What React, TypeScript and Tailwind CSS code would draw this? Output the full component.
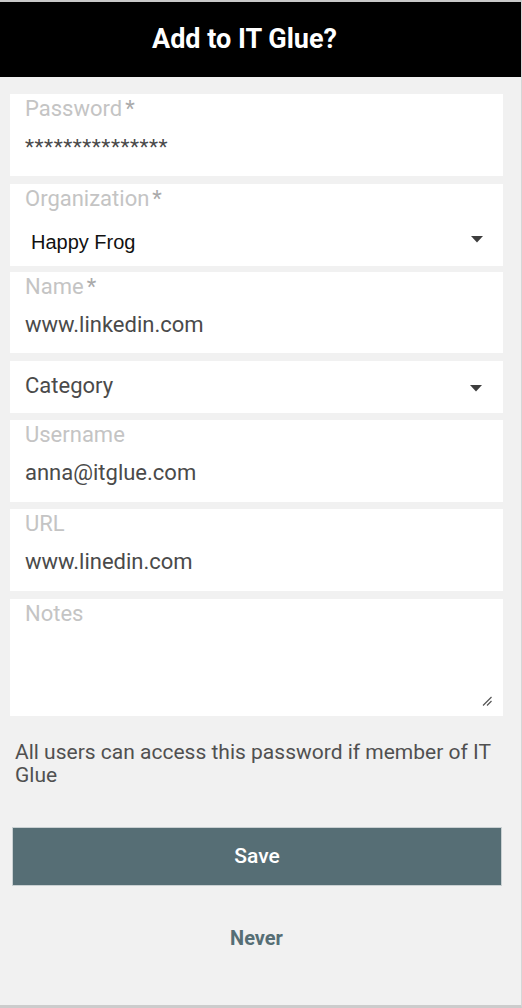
import React from "react";

const font = { fontFamily: "Roboto, 'Noto Sans', sans-serif" };

function Caret() {
  return (
    <svg width="12" height="7" viewBox="0 0 12 7" className="shrink-0">
      <path d="M0 0 H12 L6 6.5 Z" fill="#3d3d3d" />
    </svg>
  );
}

function Field({
  label,
  required,
  value,
  mt,
}: {
  label: string;
  required?: boolean;
  value: string;
  mt: string;
}) {
  return (
    <div className={`bg-white h-[82px] px-[15px] pt-[4px] ${mt}`}>
      <div className="h-[22px] leading-[22px] text-[22px] text-[#c4c4c4]">
        {label}
        {required && <span className="ml-[3px] text-[#aaaaaa]">*</span>}
      </div>
      <div className="mt-[16px] h-[22px] leading-[22px] text-[22px] text-[#4a4a4a]">{value}</div>
    </div>
  );
}

export default function App() {
  return (
    <div
      className="w-[522px] h-[1008px] bg-[#f1f1f1] border-t-2 border-t-[#c9c9c9] border-r border-r-[#d6d6d6] border-b-[3px] border-b-[#cccccc] flex flex-col overflow-hidden"
      style={font}
    >
      <div className="h-[75px] bg-black flex items-center justify-center shrink-0 pr-[32px]">
        <h1 className="text-white text-[27px] font-bold leading-none mb-[1px]">Add to IT Glue?</h1>
      </div>

      <div className="pl-[10px] pr-[18px] pt-[17px] flex flex-col">
        <div className="bg-white h-[82px] px-[15px] pt-[4px]">
          <div className="h-[22px] leading-[22px] text-[22px] text-[#c4c4c4]">
            Password<span className="ml-[3px] text-[#aaaaaa]">*</span>
          </div>
          <div className="mt-[16px] h-[22px] leading-[22px] text-[21px] text-[#4a4a4a] tracking-[0.5px]">
            ***************
          </div>
        </div>

        <div className="bg-white h-[82px] mt-[8px] pl-[15px] pr-[20px] pt-[4px]">
          <div className="h-[22px] leading-[22px] text-[22px] text-[#c4c4c4]">
            Organization<span className="ml-[3px] text-[#aaaaaa]">*</span>
          </div>
          <div className="mt-[21px] h-[22px] flex items-center justify-between">
            <span
              className="pl-[6px] text-[20px] leading-[22px] text-[#111111]"
              style={{ fontFamily: "'Liberation Sans', Arial, sans-serif" }}
            >
              Happy Frog
            </span>
            <span className="-mt-[6px]">
              <Caret />
            </span>
          </div>
        </div>

        <div className="bg-white h-[81px] mt-[6px] px-[15px] pt-[4px]">
          <div className="h-[22px] leading-[22px] text-[22px] text-[#c4c4c4]">
            Name<span className="ml-[3px] text-[#aaaaaa]">*</span>
          </div>
          <div className="mt-[16px] h-[22px] leading-[22px] text-[22px] text-[#4a4a4a]">www.linkedin.com</div>
        </div>

        <div className="bg-white h-[52px] mt-[8px] pl-[15px] pr-[21px] flex items-center justify-between">
          <span className="text-[22px] leading-[22px] text-[#4a4a4a] -mt-[2px]">Category</span>
          <span className="mt-[2px]">
            <Caret />
          </span>
        </div>

        <Field label="Username" value="anna@itglue.com" mt="mt-[7px]" />
        <Field label="URL" value="www.linedin.com" mt="mt-[7px]" />

        <div className="bg-white h-[117px] mt-[8px] px-[15px] pt-[4px] relative">
          <div className="h-[22px] leading-[22px] text-[22px] text-[#c4c4c4]">Notes</div>
          <svg width="11" height="10" viewBox="0 0 11 10" className="absolute right-[10px] bottom-[10px]">
            <path d="M1 9.5 L9.5 1 M5 9.5 L9.5 5" stroke="#555" strokeWidth="1.2" />
          </svg>
        </div>

        <p className="mt-[25px] pl-[5px] pr-[4px] text-[21px] leading-[23px] text-[#505050]">
          All users can access this password if member of IT Glue
        </p>

        <button className="mt-[40px] ml-[2px] mr-[1px] h-[59px] bg-[#566e75] border border-[#c9d0d2] text-white text-[21px] font-medium flex items-center justify-center">
          Save
        </button>

        <div className="mt-[41px] text-center text-[20px] font-bold text-[#566e75] leading-[22px]">Never</div>
      </div>
    </div>
  );
}
